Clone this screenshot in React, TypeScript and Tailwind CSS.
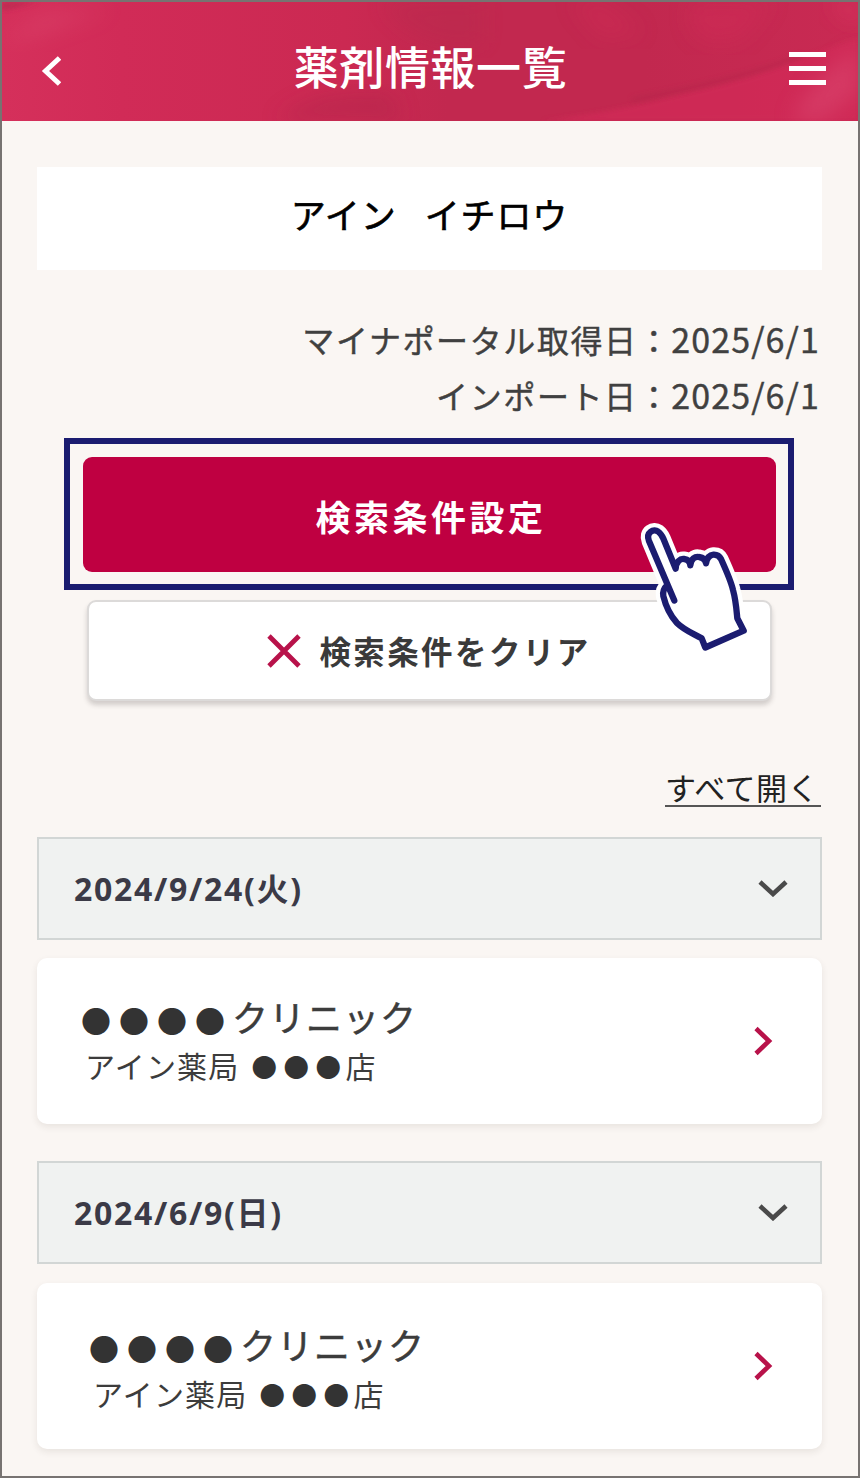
import React from "react";

function HeaderTexture() {
  return (
    <svg className="absolute inset-0 h-full w-full" viewBox="0 0 856 119" preserveAspectRatio="none" aria-hidden="true">
      <defs>
        <linearGradient id="wash" x1="0" x2="1" y1="0" y2="0">
          <stop offset="0" stopColor="#d5305b" />
          <stop offset="0.14" stopColor="#d12b57" />
          <stop offset="0.4" stopColor="#cb2952" />
          <stop offset="0.52" stopColor="#c2284f" />
          <stop offset="0.75" stopColor="#c2284f" />
          <stop offset="1" stopColor="#c92a53" />
        </linearGradient>
        <filter id="soft" x="-30%" y="-30%" width="160%" height="160%">
          <feGaussianBlur stdDeviation="10" />
        </filter>
        <filter id="edge" x="-30%" y="-30%" width="160%" height="160%">
          <feGaussianBlur stdDeviation="2.500" />
        </filter>
      </defs>
      <rect width="856" height="119" fill="url(#wash)" />
      <path d="M0 9 L36 0 L0 0 Z" fill="#b82a50" opacity="0.8" filter="url(#edge)" />
      <path d="M0 40 C30 40 70 20 110 8 L40 10 Z" fill="#dd4a70" opacity="0.4" filter="url(#soft)" />
      <path d="M380 0 L480 0 L480 40 C440 50 400 30 380 0 Z" fill="#b8294e" opacity="0.4" filter="url(#soft)" />
      <path d="M275 119 C300 95 340 88 390 92 L400 119 Z" fill="#b2284c" opacity="0.5" filter="url(#soft)" />
      <path d="M540 119 C600 112 650 100 690 90 C740 78 770 68 790 60 L856 36 L856 119 Z" fill="#d32c58" opacity="0.7" filter="url(#edge)" />
      <path d="M630 98 C690 86 740 76 800 54" fill="none" stroke="#b0264a" strokeWidth="5" opacity="0.4" filter="url(#edge)" />
      <path d="M690 0 L770 0 L740 36 C710 46 680 40 690 0 Z" fill="#d02b56" opacity="0.5" filter="url(#soft)" />
      <path d="M570 0 L600 0 L640 30 L600 36 Z" fill="#cf2b55" opacity="0.5" filter="url(#soft)" />
      <path d="M826 0 L856 0 L856 24 Z" fill="#dc3562" opacity="0.7" filter="url(#soft)" />
      <path d="M790 119 C800 90 830 65 856 45 L856 90 L820 119 Z" fill="#dc4a72" opacity="0.5" filter="url(#soft)" />
    </svg>
  );
}

function PointingHand() {
  const knuckles =
    "L675.7 568.7 C676 562 680 558.5 684 559 C688 559.5 690 562 690.3 565.3 C691 559 695 556.200 699 557 C703 557.500 705.500 560 706 563.300 C707 558 710 555 713.500 554.700 C717.500 554.500 719.500 556 721 559 C726 570 731 581 733 590 C736 601 736.500 610 737.300 618.300 L743.700 630.700 L705.300 647.500 L701.700 638.300 C692 633 684 630 676.700 622.700 C669 614 665 603 663.300 596 C662.500 591 664 588 667.300 585";
  const finger = "L649 541 C645.500 532 654 528.500 658 531.500 C661 533.500 662 535.500 663.300 538.500";
  return (
    <svg className="absolute left-[634px] top-[513px] h-[144px] w-[120px]" viewBox="636 515 120 144" aria-hidden="true">
      <path d={`M667.300 585 ${finger} ${knuckles} Z`} fill="#fff" stroke="#fff" strokeWidth="15" strokeLinejoin="round" />
      <path
        d={`M674.300 600.500 ${finger} ${knuckles}`}
        fill="none"
        stroke="#1b1c70"
        strokeWidth="6.300"
        strokeLinecap="round"
        strokeLinejoin="round"
      />
    </svg>
  );
}

function ImportDate({ label, date }: { label: string; date: string }) {
  return (
    <p className="text-[32px] tracking-[1.600px]">
      {label}
      <span className="text-[34px] tracking-[1.100px]">{date}</span>
    </p>
  );
}

function DateBar({ label }: { label: string }) {
  return (
    <div className="flex h-[103px] items-center justify-between border-2 border-[#d2d6d5] bg-[#f0f2f1] pr-[31px] pb-[1px] pl-[35px]">
      <span className="pt-[1px] font-['Noto_Sans','Noto_Sans_CJK_JP',sans-serif] text-[32px] leading-[48px] font-bold tracking-[1.700px] text-[#3b3a47]">
        {label}
      </span>
      <svg className="h-[18px] w-[32px]" viewBox="0 0 32 18" fill="none" stroke="#4a4a4a" strokeWidth="4.600" aria-hidden="true">
        <path d="M3 3 L16 15 L29 3" />
      </svg>
    </div>
  );
}

function ClinicCard({ shifted = false }: { shifted?: boolean }) {
  return (
    <div className="flex h-[166px] justify-between rounded-[10px] bg-white pr-[49px] shadow-[0_3px_7px_rgba(60,40,30,0.09)]">
      <div className={shifted ? "pt-[36px] pl-[52px]" : "pt-[33px] pl-[44px]"}>
        <p className="flex h-[50px] items-center whitespace-nowrap leading-[50px] text-[#333]">
          <span className="pt-[7px] text-[30px] tracking-[8px]">●●●●</span>
          <span className="-ml-[1px] text-[36px] tracking-[1px] text-[#3c3c3c] [-webkit-text-stroke:0.500px_#3c3c3c]">クリニック</span>
        </p>
        <p className="flex h-[48px] items-center whitespace-nowrap pl-[4px] leading-[46px] text-[#333]">
          <span className="text-[30px] tracking-[1.200px] text-[#3c3c3c]">アイン薬局</span>
          <span className="ml-[12px] pt-[2px] text-[25.500px] tracking-[6.500px]">●●●</span>
          <span className="-ml-[2px] text-[30px] text-[#3c3c3c]">店</span>
        </p>
      </div>
      <svg className="mt-[68px] h-[30px] w-[20px]" viewBox="0 0 20 30" fill="none" stroke="#b8124a" strokeWidth="4.600" aria-hidden="true">
        <path d="M3 2.500 L16 15 L3 27.500" />
      </svg>
    </div>
  );
}

export default function App() {
  return (
    <div className="relative h-[1478px] w-[860px] overflow-hidden border-2 border-[#777371] bg-[#faf6f3] font-['Noto_Sans_CJK_JP',sans-serif]">
      <header className="relative flex h-[119px] items-center justify-between pr-[32px] pl-[39px]">
        <HeaderTexture />
        <svg className="relative mt-[19px] h-[30px] w-[20px]" viewBox="0 0 20 30" fill="none" stroke="#fff" strokeWidth="5" aria-hidden="true">
          <path d="M18.500 2 L4.500 15 L18.500 28" />
        </svg>
        <h1 className="relative mt-[9px] ml-[11px] text-[45px] leading-[60px] font-medium tracking-[0.600px] text-white">薬剤情報一覧</h1>
        <div className="relative mt-[14px] flex w-[37px] flex-col gap-[9px]">
          <span className="h-[5px] bg-white" />
          <span className="h-[5px] bg-white" />
          <span className="h-[5px] bg-white" />
        </div>
      </header>

      <main className="flex flex-col pr-[36px] pl-[35px] pt-[46px]">
        <div className="flex h-[103px] items-center justify-center bg-white pb-[9px]">
          <p className="flex gap-[28px] text-[35px] leading-[50px] tracking-[0.900px] text-black [-webkit-text-stroke:0.600px_#000]">
            <span>アイン</span>
            <span>イチロウ</span>
          </p>
        </div>

        <div className="mt-[41px] flex flex-col items-end pr-[2px] leading-[56px] text-[#404040] [-webkit-text-stroke:0.400px_#404040]">
          <ImportDate label="マイナポータル取得日：" date="2025/6/1" />
          <ImportDate label="インポート日：" date="2025/6/1" />
        </div>

        <div className="mt-[15px] mr-[28px] ml-[27px] flex h-[152px] border-6 border-[#1b1c70] py-[13px] pr-[12px] pl-[13px]">
          <button className="h-[115px] w-full rounded-[9px] bg-[#bf0041] pt-[3px] pl-[3px] text-[35px] leading-[50px] font-bold tracking-[3.500px] text-white">
            検索条件設定
          </button>
        </div>

        <button className="mt-[10px] mr-[50px] ml-[50px] flex h-[101px] items-center justify-center rounded-[9px] border-2 border-[#dcdad9] bg-white text-[31.500px] leading-[46px] font-bold tracking-[2.400px] text-[#3a3a3a] shadow-[0_4px_5px_rgba(50,40,40,0.2)]">
          <svg className="mr-[18px] -ml-[1px] h-[34px] w-[34px]" viewBox="0 0 34 34" stroke="#b8124a" strokeWidth="4.800" aria-hidden="true">
            <path d="M2 2 L32 32 M32 2 L2 32" />
          </svg>
          <span className="pb-[2px]">検索条件をクリア</span>
        </button>

        <div className="mt-[65px] mr-[1px] flex h-[41px] justify-end">
          <a className="h-[41px] border-b-2 border-[#555] pr-[2px] text-[31px] leading-[42px] tracking-[0.500px] text-[#222]">すべて開く</a>
        </div>

        <section className="mt-[30px] flex flex-col gap-[18px]">
          <DateBar label="2024/9/24(火)" />
          <ClinicCard />
        </section>
        <section className="mt-[37px] flex flex-col gap-[19px]">
          <DateBar label="2024/6/9(日)" />
          <ClinicCard shifted />
        </section>
      </main>
      <PointingHand />
    </div>
  );
}
